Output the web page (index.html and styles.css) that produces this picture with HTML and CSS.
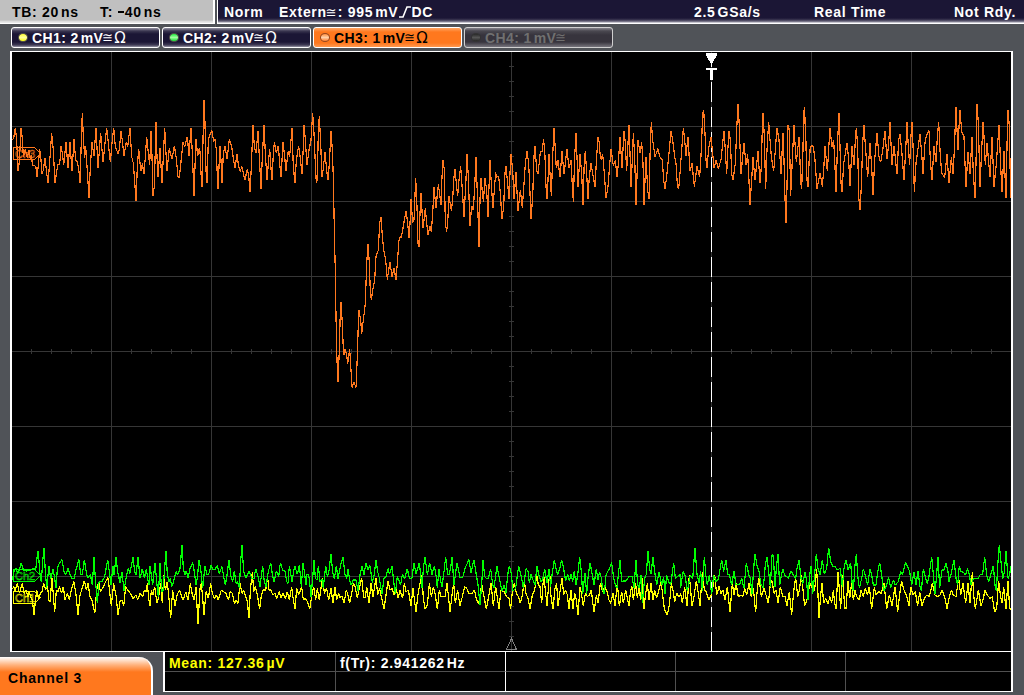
FILE: index.html
```html
<!DOCTYPE html>
<html lang="en">
<head>
<meta charset="utf-8">
<title>Oscilloscope</title>
<link rel="stylesheet" href="styles.css">
</head>
<body>
<div class="scope">
  <header class="topbar">
    <div class="timebase"><span class="tb">TB: 20<i></i>ns</span><span class="tpos">T: <svg class="minus" viewBox="0 0 7 11"><path d="M0 5h6v2H0z"/></svg>40<i></i>ns</span></div>
    <div class="status">
      <span>Norm</span>
      <span class="trig">Extern<b class="sym">≅</b>: 995<i></i>mV<svg class="edge" viewBox="0 0 13 12"><path d="M1 11h4L9 1h4"/></svg>DC</span>
      <span>2.5<i></i>GSa/s</span>
      <span>Real Time</span>
      <span class="ready">Not Rdy.</span>
    </div>
  </header>
  <nav class="channels">
    <div class="ch ch1"><span class="led"></span><span>CH1: 2<i></i>mV</span><b class="sym">≅</b><b class="ohm">Ω</b></div>
    <div class="ch ch2"><span class="led"></span><span>CH2: 2<i></i>mV</span><b class="sym">≅</b><b class="ohm">Ω</b></div>
    <div class="ch ch3"><span class="led"></span><span>CH3: 1<i></i>mV</span><b class="sym">≅</b><b class="ohm">Ω</b></div>
    <div class="ch ch4"><span class="led"></span><span>CH4: 1<i></i>mV</span><b class="sym">≅</b></div>
  </nav>
  <main class="plot">
    <svg class="screen" viewBox="12 52 999 599">
      <path class="grid" d="M111.5 52V651M211.5 52V651M311.5 52V651M411.5 52V651M511.5 52V651M611.5 52V651M711.5 52V651M811.5 52V651M911.5 52V651M12 126.5H1011M12 201.5H1011M12 276.5H1011M12 351.5H1011M12 426.5H1011M12 501.5H1011M12 576.5H1011"/>
      <line class="ticks-x" x1="31" y1="351.5" x2="1011" y2="351.5"/>
      <line class="ticks-y" x1="511.5" y1="66" x2="511.5" y2="651"/>
      <path class="origin" d="M511.5 638.5L506.5 649.5H516.5Z"/>
      <path class="cursor" d="M711.5 82V651"/>
      <g class="trace yellow">
        <polyline transform="translate(0 535) scale(.333333)" points="37,163 41,155 45,168 52,145 58,175 67,145 72,175 78,165 84,185 88,170 92,185 97,195 102,240 106,200 110,165 116,195 121,175 126,170 131,145 137,165 142,140 146,195 150,200 156,128 160,180 164,232 169,165 174,170 179,155 184,175 190,155 195,195 202,175 208,195 215,160 222,140 228,180 234,240 240,180 245,165 253,137 259,165 264,145 270,185 276,195 281,220 285,232 290,165 296,140 301,170 310,155 317,140 324,128 329,170 334,213 341,145 348,180 354,240 360,200 366,195 371,213 377,155 383,165 391,175 399,190 408,180 413,195 420,175 428,185 433,165 438,170 442,145 446,190 450,213 454,165 459,180 464,155 471,205 477,180 482,145 487,205 491,119 496,165 502,140 506,180 512,250 518,165 525,213 531,180 539,165 545,185 550,195 557,170 564,195 571,145 577,180 583,195 588,155 594,268 600,160 604,145 608,190 612,240 618,170 625,190 632,145 637,175 643,190 649,180 655,195 664,165 671,170 678,175 685,195 691,170 697,175 703,205 709,195 714,205 720,145 726,175 731,165 737,185 742,200 747,250 751,165 757,110 761,170 766,155 772,180 779,222 784,180 790,165 797,165 803,128 807,165 813,165 818,180 825,175 830,190 838,170 843,188 849,175 856,190 862,170 868,195 875,155 880,195 885,222 890,160 896,180 905,155 910,195 916,190 922,200 929,222 935,185 941,155 947,195 952,160 958,195 962,165 968,128 973,175 980,160 986,195 993,160 999,205 1005,155 1010,195 1016,175 1020,190"/>
        <polyline transform="translate(340 535) scale(.333333)" points="0,190 2,183 7,185 12,205 19,165 24,180 29,205 35,175 40,145 45,155 52,188 58,160 65,128 71,188 76,188 80,155 87,205 93,145 99,185 103,160 108,128 113,180 119,160 125,190 132,222 138,180 144,137 150,165 157,160 162,180 168,155 174,190 180,165 188,190 193,145 198,170 205,165 213,213 219,160 224,200 228,232 235,170 240,145 246,119 250,190 255,222 262,210 268,145 274,185 280,155 286,180 292,222 298,165 303,185 315,185 321,145 326,190 330,232 336,180 341,145 346,205 353,165 360,213 367,185 374,155 380,160 387,175 396,175 403,165 410,195 415,205 420,190 425,145 431,180 439,222 445,190 453,145 460,213 467,155 473,195 477,222 483,165 492,170 500,185 507,190 512,222 518,160 523,145 529,175 535,185 541,205 547,180 553,137 558,175 564,190 570,222 577,180 584,165 590,120 595,150 600,155 605,205 611,119 616,165 621,213 629,110 633,185 639,222 645,160 650,145 654,213 660,170 666,128 671,180 677,165 682,180 687,222 693,165 699,222 704,175 709,195 714,240 720,155 725,180 730,213 736,175 742,185 748,180 754,165 758,200 762,232 769,180 774,205 781,145 788,170 794,155 801,170 807,195 812,205 819,175 825,213 832,145 838,213 845,170 850,205 857,165 862,190 867,213 872,165 876,155 880,195 887,145 892,190 897,155 902,195 906,128 912,222 917,175 922,145 927,195 933,145 939,195 944,165 950,190 957,165 963,137 968,180 973,222 982,240 988,210 994,145 999,165 1004,200 1010,175 1017,185 1020,180"/>
        <polyline transform="translate(680 535) scale(.333333)" points="0,180 2,175 7,205 14,155 21,213 28,119 36,213 42,185 49,137 55,175 60,213 67,110 73,165 79,170 86,195 92,185 98,160 104,119 110,180 117,155 123,175 129,165 135,195 142,155 150,232 157,145 162,180 168,145 175,185 182,180 188,185 194,160 200,180 207,145 214,185 220,160 227,232 232,160 237,128 244,185 252,160 258,180 265,205 271,145 276,137 282,175 288,165 294,205 301,155 308,185 315,185 321,213 328,170 335,240 341,170 347,128 353,185 358,165 364,119 369,165 374,213 381,195 387,160 393,145 399,170 404,165 410,101 414,180 417,250 421,190 426,145 431,205 437,190 444,205 450,185 455,205 460,165 464,205 468,222 474,110 482,222 488,119 494,222 498,220 504,137 509,190 515,145 520,195 525,165 530,185 538,195 543,165 550,185 556,160 562,180 568,155 575,222 583,155 588,180 596,170 604,175 612,145 620,222 628,180 636,213 645,155 653,232 660,170 665,137 672,165 679,180 687,213 692,155 699,180 706,170 713,213 719,170 726,213 733,190 740,180 748,185 757,145 765,180 771,185 780,180 787,165 795,190 801,222 808,185 814,165 820,180 828,185 836,128 842,180 849,145 857,205 864,145 870,205 877,110 881,180 886,222 895,165 903,213 909,195 915,165 922,180 930,190 937,185 944,232 950,220 956,137 961,180 966,205 971,155 978,222 984,137 989,222 993,222"/>
      </g>
      <g class="trace green">
        <polyline transform="translate(0 535) scale(.333333)" points="37,135 42,110 48,100 53,115 58,105 64,83 70,105 80,108 92,105 100,100 107,105 111,70 114,47 118,90 121,130 124,141 128,80 132,38 136,110 140,160 147,92 152,132 159,101 164,130 168,159 172,100 178,85 186,74 192,110 197,120 204,101 210,118 216,132 223,130 229,100 237,74 242,120 247,118 253,74 260,120 265,129 271,118 277,150 282,65 286,130 292,205 297,140 306,140 314,125 323,74 328,110 333,150 339,92 342,120 348,65 353,110 360,143 366,110 372,168 378,130 385,100 390,115 399,65 404,110 408,120 414,65 420,130 427,101 433,130 439,101 443,130 447,150 450,92 458,150 465,83 470,140 475,186 480,83 485,170 489,168 494,100 498,47 502,120 507,140 511,130 515,155 520,143 528,110 533,120 540,100 546,29 550,100 554,120 559,108 564,129 570,100 578,83 583,110 588,150 592,130 597,74 603,110 608,160 615,92 621,120 626,118 633,92 639,103 645,103 652,92 658,115 666,95 672,130 676,150 681,120 687,74 692,120 698,140 703,108 708,145 712,140 718,159 722,80 726,29 731,110 738,129 747,108 756,130 762,132 767,101 773,120 780,155 788,92 793,140 798,155 805,110 812,83 818,125 822,140 829,108 836,125 841,83 848,105 855,108 860,140 864,145 868,92 876,140 884,92 892,118 898,90 904,155 909,83 913,110 918,150 921,118 926,120 929,140 933,186 938,130 942,74 946,130 951,135 955,92 960,140 966,132 970,159 977,92 982,125 987,108 993,56 998,110 1003,132 1009,92 1014,132 1020,100"/>
        <polyline transform="translate(340 535) scale(.333333)" points="0,100 2,90 9,65 15,120 20,130 24,101 30,140 34,150 40,135 48,135 54,168 60,120 66,92 72,120 78,83 84,105 90,92 94,120 97,143 103,118 108,74 113,110 118,130 126,177 132,130 138,125 144,101 149,118 156,92 161,140 166,177 172,123 178,140 182,150 187,118 194,132 202,101 208,130 216,130 222,83 228,118 238,83 242,120 246,159 250,100 255,65 262,120 269,83 276,120 283,92 288,120 292,159 297,101 302,140 306,155 312,110 317,65 323,120 327,118 332,100 336,65 342,150 351,83 360,127 368,127 375,100 387,74 393,113 402,74 409,120 414,150 420,210 425,150 429,74 434,125 441,132 445,130 452,101 458,150 462,159 471,92 478,130 486,168 493,150 498,175 503,120 508,92 514,118 519,168 527,160 536,92 543,120 550,159 558,101 564,108 568,145 573,118 579,135 585,150 591,92 596,118 603,140 608,135 614,101 621,145 627,101 632,155 636,120 643,74 648,101 653,118 659,101 665,74 671,101 677,138 683,118 688,138 693,118 698,140 703,108 708,150 713,120 719,65 724,110 728,177 735,115 740,177 744,130 750,83 757,120 762,150 769,101 774,135 779,110 784,130 788,165 793,177 798,120 808,101 815,83 821,130 826,150 831,159 836,110 840,74 845,140 851,138 858,138 867,125 876,125 882,159 888,74 893,150 898,160 903,120 907,205 914,130 919,118 924,47 929,101 933,118 939,65 944,110 950,150 957,110 963,140 966,150 971,125 975,177 980,120 986,140 992,150 1001,83 1006,130 1012,125 1020,118"/>
        <polyline transform="translate(680 535) scale(.333333)" points="0,118 2,159 9,110 15,120 22,168 31,120 38,132 45,38 51,118 57,145 62,108 67,168 73,65 78,125 82,150 88,120 95,177 101,120 108,140 115,132 119,110 125,74 131,110 138,74 143,118 148,118 155,150 162,108 168,150 180,147 185,130 192,160 199,83 206,118 211,130 216,177 221,100 225,56 231,92 237,110 243,150 250,158 256,90 261,65 266,110 271,155 276,60 280,60 285,155 289,100 294,56 299,150 308,101 314,120 325,130 333,108 340,120 347,130 351,101 357,74 363,130 369,145 375,110 380,140 384,195 388,130 393,92 398,177 403,130 409,56 414,101 420,120 427,74 433,118 440,100 446,38 452,80 459,95 465,95 472,105 481,100 487,155 492,100 498,74 504,105 512,83 516,140 520,168 525,90 529,56 533,120 538,159 545,130 550,101 557,125 563,150 570,101 575,120 580,150 588,150 593,110 599,83 605,120 611,168 618,155 626,127 632,159 640,135 646,150 655,140 662,110 668,118 676,83 683,95 689,110 695,150 702,110 708,150 714,108 720,155 724,168 730,101 736,125 741,145 746,130 755,65 760,118 765,177 769,130 774,65 779,159 786,105 792,105 798,83 804,110 807,140 815,110 822,74 828,130 833,150 838,92 843,110 850,112 857,120 863,101 868,120 873,150 879,132 895,130 901,118 908,118 914,65 920,120 926,140 932,120 940,92 945,150 949,168 954,80 958,29 963,80 968,132 973,110 978,47 984,130 989,118 993,92"/>
      </g>
      <g class="trace orange">
        <polyline transform="translate(0 90) scale(.333333)" points="37,150 41,145 46,113 50,150 54,244 58,215 63,113 67,145 70,200 76,178 82,205 87,180 90,205 95,195 97,225 103,226 108,232 111,262 114,235 119,177 123,210 126,253 130,240 135,203 139,240 144,280 148,230 155,130 160,180 165,280 170,245 174,222 179,225 183,167 188,195 191,226 198,157 204,235 210,157 216,244 222,148 227,210 232,215 236,235 240,280 244,150 247,68 250,140 254,205 257,168 261,230 267,325 271,230 276,157 282,198 288,113 294,235 302,130 309,217 320,113 326,170 331,217 336,160 341,113 346,170 354,190 358,180 363,122 368,160 372,198 378,158 383,170 390,113 395,200 400,220 403,260 408,334 412,230 416,176 419,210 423,244 427,220 432,253 436,200 440,140 445,190 449,226 453,122 456,200 459,317 463,290 468,95 471,200 474,262 480,175 486,280 490,200 494,113 498,190 501,244 508,175 516,208 523,167 529,205 534,262 538,262 543,215 549,157 554,170 562,140 567,198 573,113 577,190 582,317 585,230 588,148 593,198 597,176 600,183"/>
        <polyline transform="translate(200 90) scale(.333333)" points="0,183 4,270 6,290 9,150 12,31 15,100 18,240 21,280 25,150 31,130 36,122 41,155 45,148 49,180 52,260 54,298 57,230 60,167 63,210 66,280 70,190 75,167 81,208 88,148 95,170 100,205 105,235 111,193 116,230 120,244 126,230 131,255 135,271 141,239 146,255 150,307 154,230 159,104 163,170 168,190 174,122 178,200 183,298 187,200 192,104 196,190 201,271 205,220 209,176 213,235 216,271 220,190 223,157 229,190 235,167 239,220 243,262 246,210 249,157 254,200 258,244 264,185 269,200 273,150 276,113 280,230 285,280 289,210 296,167 301,205 306,253 310,170 312,104 316,150 321,226 327,180 333,150 338,68 342,130 346,220 349,280 352,270 355,120 358,77 362,160 366,262 370,235 375,185 380,240 384,271 388,220 393,122 397,180 400,265 403,420 406,545 408,680 411,812 414,875 418,780 421,660 423,635 427,700 430,780 432,794 435,778 440,795 443,821 449,778 453,840 456,892 462,877 468,892 472,800 475,700 477,661 482,690 485,731 490,690 496,640 500,520 504,463 508,520 511,605 514,631 518,600 524,570 528,500 535,480 539,400 543,382 548,450 552,485 557,510 562,569 566,540 570,517 576,560 582,535 588,569 592,520 597,450 600,440"/>
        <polyline transform="translate(400 90) scale(.333333)" points="0,440 3,443 8,420 13,390 18,364 22,390 27,443 30,400 33,328 38,398 42,390 47,265 51,350 54,460 57,470 60,370 63,310 69,415 76,355 80,400 84,434 90,409 94,425 98,370 102,292 108,353 115,283 123,344 126,260 129,211 133,240 136,400 140,425 144,380 147,319 154,362 158,330 161,270 165,238 169,280 173,317 178,260 182,229 187,300 192,380 197,290 201,193 205,260 210,407 215,347 220,360 225,270 228,202 232,310 237,470 240,330 243,265 250,335 255,265 260,300 264,380 267,290 270,211 275,300 279,353 283,300 287,247 290,262 296,258 301,310 306,388 311,350 315,250 318,229 322,270 327,326 330,250 333,193 338,240 342,326 348,247 354,362 361,301 367,353 372,280 376,220 381,184 386,220 390,310 393,388 398,320 402,200 405,167 410,240 414,253 421,185 426,185 431,148 435,200 438,290 441,326 444,270 447,193 450,250 454,317 458,200 462,113 466,180 469,235 474,211 480,262 486,184 492,253 501,176 507,235 513,211 517,290 520,335 524,200 528,130 531,200 534,290 540,193 545,250 549,344 553,210 556,184 560,250 564,326 568,260 573,220 578,250 585,290 590,200 594,140 598,160 600,190"/>
        <polyline transform="translate(600 90) scale(.333333)" points="0,190 3,208 8,193 13,250 18,325 24,290 33,176 40,227 46,211 51,262 55,220 60,140 66,235 72,122 76,160 80,244 84,160 87,104 90,190 93,290 97,210 100,130 104,200 108,344 112,230 114,149 120,190 125,157 129,220 132,344 138,202 143,300 147,326 150,200 154,95 158,150 165,200 169,190 174,176 179,200 187,210 191,270 195,298 200,260 207,190 213,122 218,150 224,200 228,220 232,285 236,298 240,250 245,180 250,113 254,150 258,198 264,140 270,244 276,220 283,290 291,229 299,262 304,180 308,70 311,59 315,130 318,210 321,235 326,175 333,140 338,190 342,235 348,211 355,235 363,210 368,160 372,122 376,180 380,253 384,170 387,122 391,150 395,250 399,271 406,220 410,120 414,41 418,110 423,253 427,210 432,158 438,226 443,193 446,250 450,344 455,270 459,202 465,271 474,184 480,280 484,230 487,110 489,68 493,140 497,298 501,180 506,95 510,150 514,200 521,244 526,180 531,113 537,150 543,253 549,130 552,210 555,325 558,398 561,290 564,104 568,120 572,317 576,230 582,104 585,160 589,217 593,180 597,140 601,240 604,298 608,220 611,80 613,50 617,140 621,270 624,290 628,200 630,176"/>
        <polyline transform="translate(800 90) scale(.333333)" points="0,211 5,298 9,180 13,50 17,120 20,260 24,290 28,200 33,168 40,168 45,210 51,298 60,248 67,290 71,240 75,167 82,244 90,113 96,172 101,149 105,230 108,307 113,150 117,68 120,170 123,280 126,307 131,220 136,190 141,158 146,210 150,289 156,167 162,226 166,150 169,113 173,170 176,320 180,361 184,290 188,160 192,104 197,180 203,262 210,158 215,230 219,316 224,210 231,130 237,200 242,217 249,175 255,122 261,208 266,160 270,95 276,226 282,167 291,253 296,150 300,131 305,180 312,271 317,180 321,95 325,170 329,226 332,150 336,95 340,190 343,307 348,220 352,190 360,131 365,190 369,253 375,157 380,135 387,122 391,210 396,271 402,167 408,217 412,140 416,95 420,180 425,250 434,262 441,193 447,280 454,202 459,253 463,180 468,50 471,120 474,181 477,110 480,59 485,125 492,140 495,220 498,290 504,185 510,253 516,140 520,250 525,325 528,220 531,41 535,100 540,290 545,180 549,95 552,140 556,226 561,158 570,262 576,140 582,290 589,220 597,104 602,230 606,307 612,184 618,325 622,120 624,59 628,110 632,325"/>
      </g>
      <path class="marker" d="M706 53H717V55L712 64V67H711V64L706 55ZM706 68H717V70H713V80H710V70H706Z"/>
      <g class="badge orange"><path d="M13.5 147.5H34.5L40.5 153.5L34.5 159.5H13.5Z"/><text x="15" y="158">Ch3</text></g>
      <g class="badge green"><path d="M13.5 569.5H34.5L40.5 575.5L34.5 581.5H13.5Z"/><text x="15" y="580">Ch2</text></g>
      <g class="badge yellow"><path d="M13.5 591.5H34.5L40.5 597.5L34.5 603.5H13.5Z"/><text x="15" y="602">Ch1</text></g>
    </svg>
  </main>
  <footer class="bottom">
    <div class="tab">Channel 3</div>
    <div class="measures">
      <div class="cell mean">Mean: 127.36<i></i>µV</div>
      <div class="cell strong">f(Tr): 2.941262<i></i>Hz</div>
      <div class="cell"></div><div class="cell"></div><div class="cell last"></div>
      <div class="cell low"></div><div class="cell low strong"></div><div class="cell low"></div><div class="cell low"></div><div class="cell low last"></div>
    </div>
  </footer>
</div>
</body>
</html>
```
FILE: styles.css
```css
* { box-sizing: border-box; }
body { margin: 0; background: #505358; }
.scope {
  width: 1024px; height: 695px; overflow: hidden;
  display: flex; flex-direction: column;
  font: bold 14px/22px "Liberation Sans", Arial, sans-serif;
  letter-spacing: .7px; white-space: nowrap; color: #fff;
}
i { display: inline-block; width: 2px; }
.sym, .ohm { font: normal 13px/18px "DejaVu Sans", sans-serif; letter-spacing: 0; }
.sym { display: inline-block; width: 11px; font-size: 13px; text-indent: -1px; }
.ohm { font-size: 15px; }

.topbar { display: flex; gap: 2px; height: 24px; line-height: 24px; }
.timebase {
  width: 215px; padding-left: 12px; display: flex; color: #000;
  background: linear-gradient(#c0c0c0 20px, #e8e8e8 22px);
  border-right: 2px solid #fff; border-bottom: 1px solid #fff;
}
.tb { width: 88px; }
.minus { width: 7px; height: 11px; fill: #000; }
.status {
  flex: 1; display: grid; grid-template-columns: 55px 415px 120px 1fr auto;
  padding: 0 8px 0 6px;
  background: linear-gradient(#1b1635 18px, #3c3852 20px, #8d8b9c 22px, #fff 23px);
  border-left: 1px solid #fff; border-bottom: 1px solid #fff;
}
.edge { width: 13px; height: 12px; fill: none; stroke: #fff; stroke-width: 1.6; vertical-align: -1px; }

.channels { display: flex; gap: 2px; height: 27px; padding: 3px 0 0 11px; }
.ch {
  width: 149px; height: 21px; padding-left: 6px; display: flex; align-items: center;
  border: 1px solid #fff; border-radius: 3px; letter-spacing: .4px;
  background: linear-gradient(#9694a4, #3a3650 3px, #1b1635 6px, #1b1635 14px, #403c56 17px, #9694a4);
}
.led { width: 10px; height: 9px; margin-right: 4px; border-radius: 50%; border: 1px solid #55534c; }
.ch1 .led { background: linear-gradient(#ffff30, #ffffa0, #ffff10); }
.ch2 .led { background: linear-gradient(#20f040, #a0ffa0, #10e030); }
.ch3 .led { background: linear-gradient(#ff9040, #ffd0a8, #ff8030); border-color: #984820; }
.ch4 .led { background: linear-gradient(#292929, #555, #292929); border-color: #333; }
.ch3 { color: #000; background: linear-gradient(#ffa665, #ff781e 4px, #ff781e 15px, #ff9850); }
.ch4 { color: #707070; border-color: #d0d0d0; background: linear-gradient(#85838b, #4a4850 3px, #37343d 7px, #37343d 14px, #77757d); }

.plot {
  width: 1003px; height: 601px; margin-left: 10px; flex: none;
  background: #000; border: solid #fff; border-width: 1px 2px;
}
.screen { display: block; width: 999px; height: 599px; shape-rendering: crispEdges; }
.grid { stroke: #363636; fill: none; }
.ticks-x { stroke: #363636; stroke-width: 5; stroke-dasharray: 1 19; }
.ticks-y { stroke: #363636; stroke-width: 5; stroke-dasharray: 1 14; }
.origin { fill: none; stroke: #808080; }
.cursor { stroke: #fff; stroke-dasharray: 20 5; }
.marker { fill: #fff; }
.trace polyline { fill: none; stroke-width: 1.2; stroke-linejoin: bevel; vector-effect: non-scaling-stroke; }
.orange { stroke: #ff781e; }
.green { stroke: #00ff00; }
.yellow { stroke: #ffff00; }
.badge { fill: none; }
.badge text { font: normal 11px "Liberation Sans", Arial, sans-serif; letter-spacing: 0; stroke-width: .5; }

.bottom { flex: 1; display: flex; gap: 10px; }
.tab {
  width: 153px; height: 38px; margin-top: 5px; padding: 10px 0 0 8px; color: #000;
  letter-spacing: .8px; border-right: 2px solid #fff; border-radius: 0 14px 0 0;
  background: linear-gradient(#fff, #ffb27d 8px, #ff781e 15px);
}
.measures {
  width: 850px; height: 40px; background: #000;
  border: 2px solid #fff; border-top: 0; border-bottom-width: 1px;
  display: grid; grid-template: 20px 19px / 171px 170px 170px 170px 165px;
}
.cell { padding-left: 4px; border-right: 1px solid #505050; border-bottom: 1px solid #505050; }
.low { border-bottom: 0; }
.strong { border-right-color: #fff; }
.last { border-right: 0; }
.mean { color: #ff0; }
```
